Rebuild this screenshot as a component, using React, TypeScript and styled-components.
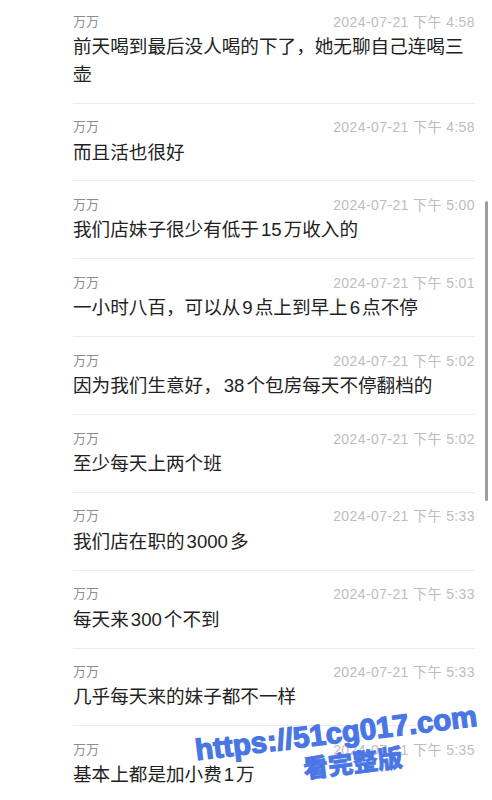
import React from "react";
import styled, { createGlobalStyle } from "styled-components";

const GlobalStyle = createGlobalStyle`
  html, body { margin: 0; padding: 0; background: #ffffff; }
  #root { width: 492px; }
`;

const Screen = styled.div`
  position: relative;
  width: 492px;
  height: 800px;
  overflow: hidden;
  background: #ffffff;
  font-family: "Liberation Sans", "Noto Sans CJK SC", sans-serif;
`;

const List = styled.div`
  display: flex;
  flex-direction: column;
  padding: 0 17px 0 73px;
`;

const Row = styled.div`
  display: flex;
  flex-direction: column;
  padding: 13.5px 0 14.55px;
  border-bottom: 1px solid #ebebeb;
  &:first-child {
    padding-top: 11.9px;
  }
`;

const Meta = styled.div`
  display: flex;
  align-items: center;
  justify-content: space-between;
  height: 20px;
  margin-bottom: 1.4px;
`;

const Name = styled.span`
  font-size: 13px;
  line-height: 20px;
  color: #8d8d8d;
`;

const Time = styled.span`
  font-size: 14px;
  line-height: 20px;
  letter-spacing: 0.4px;
  color: #bdbdbd;
`;

const Text = styled.div`
  font-size: 18.6px;
  line-height: 27.4px;
  color: #222222;
`;

const Num = styled.span`
  margin: 0 2px;
`;

const ScrollThumb = styled.div`
  position: absolute;
  left: 485px;
  top: 201px;
  width: 3px;
  height: 300px;
  border-radius: 2px;
  background: #9d9d9d;
`;

const Watermark = styled.div`
  position: absolute;
  left: 196px;
  top: 718px;
  width: 284px;
  display: flex;
  flex-direction: column;
  align-items: center;
  transform: rotate(-7deg);
  color: #4a76e5;
  pointer-events: none;
  text-shadow: 0 0 2px rgba(255, 255, 255, 0.95);
`;

const MarkUrl = styled.div`
  font-family: "Liberation Sans", "DejaVu Sans", sans-serif;
  font-weight: 700;
  font-size: 29.5px;
  line-height: 30px;
  white-space: nowrap;
  -webkit-text-stroke: 1.3px #4a76e5;
`;

const MarkTitle = styled.div`
  font-family: "Noto Sans CJK SC", sans-serif;
  font-weight: 900;
  font-size: 25px;
  line-height: 30.8px;
  padding-left: 26px;
  white-space: nowrap;
  -webkit-text-stroke: 0.6px #4a76e5;
`;

type Part = string | { n: string };
type Msg = { time: string; parts: Part[] };

const messages: Msg[] = [
  { time: "4:58", parts: ["前天喝到最后没人喝的下了，她无聊自己连喝三壶"] },
  { time: "4:58", parts: ["而且活也很好"] },
  { time: "5:00", parts: ["我们店妹子很少有低于", { n: "15" }, "万收入的"] },
  { time: "5:01", parts: ["一小时八百，可以从", { n: "9" }, "点上到早上", { n: "6" }, "点不停"] },
  { time: "5:02", parts: ["因为我们生意好，", { n: "38" }, "个包房每天不停翻档的"] },
  { time: "5:02", parts: ["至少每天上两个班"] },
  { time: "5:33", parts: ["我们店在职的", { n: "3000" }, "多"] },
  { time: "5:33", parts: ["每天来", { n: "300" }, "个不到"] },
  { time: "5:33", parts: ["几乎每天来的妹子都不一样"] },
  { time: "5:35", parts: ["基本上都是加小费", { n: "1" }, "万"] },
];

export default function App() {
  return (
    <>
      <GlobalStyle />
      <Screen>
        <List>
          {messages.map((m, i) => (
            <Row key={i}>
              <Meta>
                <Name>万万</Name>
                <Time>2024-07-21 下午 {m.time}</Time>
              </Meta>
              <Text>
                {m.parts.map((p, j) =>
                  typeof p === "string" ? (
                    <React.Fragment key={j}>{p}</React.Fragment>
                  ) : (
                    <Num key={j}>{p.n}</Num>
                  )
                )}
              </Text>
            </Row>
          ))}
        </List>
        <ScrollThumb />
        <Watermark>
          <MarkUrl>https://51cg017.com</MarkUrl>
          <MarkTitle>看完整版</MarkTitle>
        </Watermark>
      </Screen>
    </>
  );
}
